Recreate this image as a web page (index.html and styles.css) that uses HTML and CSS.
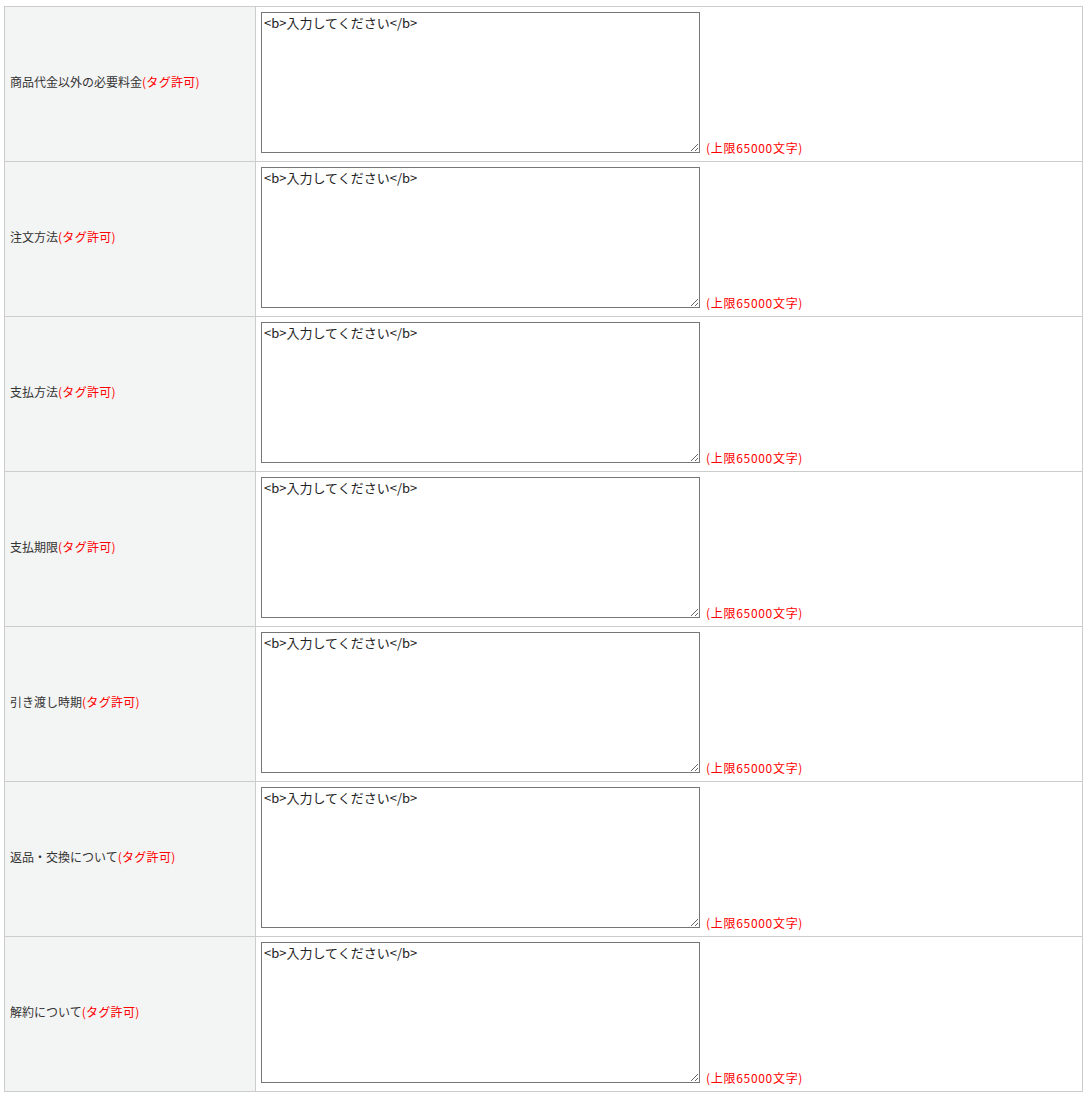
FILE: index.html
```html
<!DOCTYPE html>
<html lang="ja">
<head>
<meta charset="utf-8">
<title>フォーム</title>
<link rel="stylesheet" href="styles.css">
</head>
<body>
<table class="form-table">
  <tbody>
    <tr>
      <th class="label-cell">商品代金以外の必要料金<span class="note">(タグ許可)</span></th>
      <td class="input-cell"><textarea class="field">&lt;b&gt;入力してください&lt;/b&gt;</textarea><span class="limit">(上限65000文字)</span></td>
    </tr>
    <tr>
      <th class="label-cell">注文方法<span class="note">(タグ許可)</span></th>
      <td class="input-cell"><textarea class="field">&lt;b&gt;入力してください&lt;/b&gt;</textarea><span class="limit">(上限65000文字)</span></td>
    </tr>
    <tr>
      <th class="label-cell">支払方法<span class="note">(タグ許可)</span></th>
      <td class="input-cell"><textarea class="field">&lt;b&gt;入力してください&lt;/b&gt;</textarea><span class="limit">(上限65000文字)</span></td>
    </tr>
    <tr>
      <th class="label-cell">支払期限<span class="note">(タグ許可)</span></th>
      <td class="input-cell"><textarea class="field">&lt;b&gt;入力してください&lt;/b&gt;</textarea><span class="limit">(上限65000文字)</span></td>
    </tr>
    <tr>
      <th class="label-cell">引き渡し時期<span class="note">(タグ許可)</span></th>
      <td class="input-cell"><textarea class="field">&lt;b&gt;入力してください&lt;/b&gt;</textarea><span class="limit">(上限65000文字)</span></td>
    </tr>
    <tr>
      <th class="label-cell">返品・交換について<span class="note">(タグ許可)</span></th>
      <td class="input-cell"><textarea class="field">&lt;b&gt;入力してください&lt;/b&gt;</textarea><span class="limit">(上限65000文字)</span></td>
    </tr>
    <tr>
      <th class="label-cell">解約について<span class="note">(タグ許可)</span></th>
      <td class="input-cell"><textarea class="field">&lt;b&gt;入力してください&lt;/b&gt;</textarea><span class="limit">(上限65000文字)</span></td>
    </tr>
  </tbody>
</table>
</body>
</html>
```

FILE: styles.css
```css
html, body {
  margin: 0;
  padding: 0;
  background: #ffffff;
}
body {
  padding: 6px 0 0 4px;
  font-family: "Noto Sans CJK JP", "Noto Sans", sans-serif;
  font-size: 12px;
  color: #333333;
}
.form-table {
  border-collapse: collapse;
  width: 1079px;
}
.label-cell,
.input-cell {
  border: 1px solid #cccccc;
  padding: 5px;
  line-height: 1.33;
}
.label-cell {
  width: 240px;
  padding-bottom: 9px;
  background: #f3f4f4;
  text-align: left;
  font-weight: normal;
  vertical-align: middle;
}
.note {
  color: #ff0000;
  letter-spacing: 0.3px;
}
.input-cell {
  vertical-align: top;
  background: #ffffff;
}
.limit {
  color: #ff0000;
  margin-left: 6px;
  letter-spacing: 0.7px;
}
.field {
  box-sizing: border-box;
  width: 439px;
  height: 141px;
  margin: 0;
  padding: 2px;
  border: 1px solid #767676;
  font-family: "Noto Sans CJK JP", "Noto Sans", sans-serif;
  font-size: 13px;
  line-height: 1.3;
  color: #222222;
  vertical-align: baseline;
  resize: both;
}
```
